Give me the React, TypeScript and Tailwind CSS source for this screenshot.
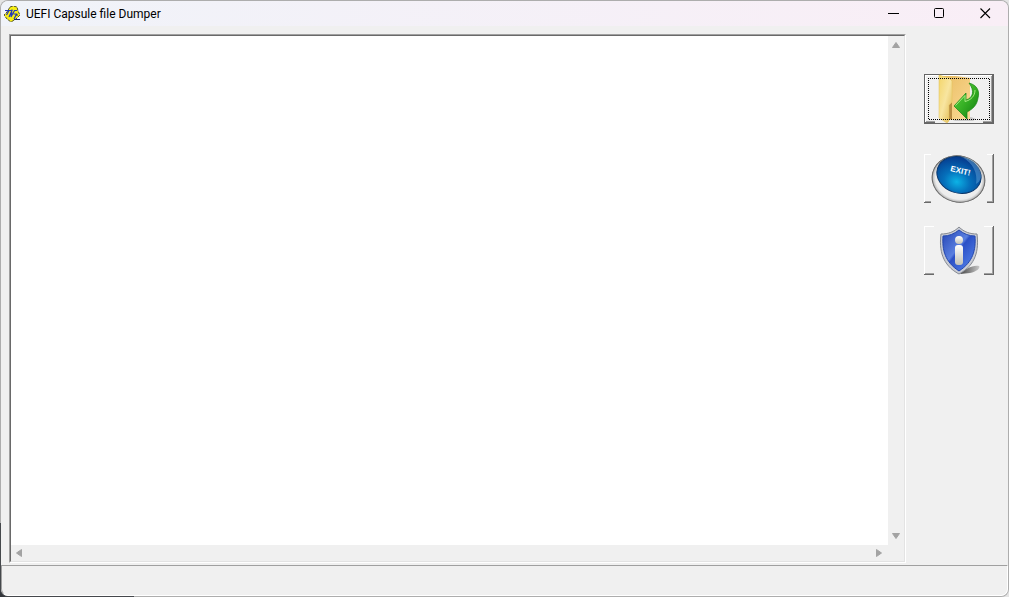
import type { ReactNode } from 'react';

function AppIcon() {
  return (
    <svg viewBox="0 0 16 16" className="w-4 h-4" aria-hidden="true">
      <path d="M6 1l3-1 4 1 1 4 2 4-4 4-5 3-4-3-3-4 3-3z" fill="#f6ee14" stroke="#2b2c1c" strokeWidth="0.8" strokeDasharray="3 1" />
      <path d="M1 4.500h4L2.500 9M5 4.500h3L5 11M8 3.500L7 11M7 11l3.500-6.500M10 4.500h3M9.500 8h3l-2.500 5" fill="none" stroke="#2339b8" strokeWidth="1.2" />
      <path d="M10 13.500h6M12 9h2" fill="none" stroke="#1a2474" strokeWidth="1.2" />
    </svg>
  );
}

function FolderArt() {
  return (
    <svg viewBox="0 0 70 50" className="block w-full h-full" aria-hidden="true">
      <defs>
        <linearGradient id="folderBack" x1="0" y1="0" x2="1" y2="1">
          <stop offset="0" stopColor="#e9bd62" />
          <stop offset="1" stopColor="#fbd995" />
        </linearGradient>
        <linearGradient id="folderFront" x1="0" y1="0" x2="1" y2="1">
          <stop offset="0" stopColor="#f3d569" />
          <stop offset="0.5" stopColor="#f8e5a0" />
          <stop offset="1" stopColor="#dfb64c" />
        </linearGradient>
        <linearGradient id="arrowGreen" x1="0" y1="0" x2="1" y2="1">
          <stop offset="0" stopColor="#62d648" />
          <stop offset="0.5" stopColor="#36b024" />
          <stop offset="1" stopColor="#0f7a10" />
        </linearGradient>
      </defs>
      <rect x="11" y="2" width="48" height="47" fill="#f0f0f0" />
      <path d="M29 46l18-3 5 2-3 2-18 0z" fill="#c9c9c9" />
      <path d="M16 2h16l14 2v41l-20 1z" fill="url(#folderBack)" />
      <path d="M25 31l3-3v17h-3z" fill="#b98d43" />
      <path d="M15 1l10 3 3 3v21l-3 3v16l-2 2-8-5z" fill="url(#folderFront)" stroke="#e3c25a" strokeWidth="0.5" />
      <path
        d="M45 9C53 11 56 17 54 24C53 31 49 35 43 38V45L30 32L42 19V26C49 24 51 17 45 9z"
        fill="url(#arrowGreen)"
        stroke="#168414"
        strokeWidth="0.7"
      />
      <path d="M31.500 31.500L41 21.500V27.500C47 26 51 22 51 16" fill="none" stroke="#a5ea82" strokeWidth="1" />
      <rect x="4.500" y="4.500" width="61" height="41" fill="none" stroke="#000" strokeDasharray="1 1" strokeDashoffset="0.5" shapeRendering="crispEdges" />
    </svg>
  );
}

function ExitArt() {
  return (
    <svg viewBox="0 0 70 49" className="block w-full h-full" aria-hidden="true">
      <defs>
        <radialGradient id="exitBlue" cx="0.5" cy="0.7" r="0.65">
          <stop offset="0" stopColor="#0cb3e6" />
          <stop offset="0.45" stopColor="#0570bb" />
          <stop offset="1" stopColor="#063f91" />
        </radialGradient>
        <radialGradient id="exitRim" cx="0.5" cy="0.5" r="0.5">
          <stop offset="0" stopColor="#fff" />
          <stop offset="0.86" stopColor="#ececec" />
          <stop offset="0.94" stopColor="#c4c4c4" />
          <stop offset="1" stopColor="#3a3a3a" />
        </radialGradient>
      </defs>
      <rect x="7" width="56" height="49" fill="#f0f0f0" />
      <ellipse cx="34.500" cy="25" rx="27" ry="23.500" transform="rotate(14 34.500 25)" fill="url(#exitRim)" />
      <ellipse cx="35" cy="21" rx="22.500" ry="18" transform="rotate(18 35 21)" fill="url(#exitBlue)" stroke="#0b376b" strokeWidth="1" />
      <path d="M38 3c11 1 19 9 19 20-1 4-3 6-5 7 2-11-3-21-14-27z" fill="#79b9e6" opacity="0.4" />
      <text x="26" y="17" transform="rotate(13 26 17)" fill="#fff" fontFamily="Liberation Sans, sans-serif" fontSize="8" fontWeight="700">
        EXIT!
      </text>
    </svg>
  );
}

function InfoArt() {
  return (
    <svg viewBox="0 0 70 49" className="block w-full h-full" aria-hidden="true">
      <defs>
        <linearGradient id="shieldBlue" x1="0" y1="0" x2="1" y2="1">
          <stop offset="0" stopColor="#2444b4" />
          <stop offset="0.45" stopColor="#5a80e0" />
          <stop offset="0.5" stopColor="#2b50c6" />
          <stop offset="1" stopColor="#5a8bf0" />
        </linearGradient>
        <linearGradient id="shieldInfo" x1="0" y1="0" x2="0" y2="1">
          <stop offset="0" stopColor="#fff" />
          <stop offset="1" stopColor="#c2c2b8" />
        </linearGradient>
        <linearGradient id="shieldShadow" x1="0" y1="0" x2="1" y2="0">
          <stop offset="0" stopColor="#444" />
          <stop offset="1" stopColor="#c8c8c8" />
        </linearGradient>
      </defs>
      <rect x="10" width="50" height="49" fill="#f0f0f0" />
      <path d="M36 48c5-5 12-9 19-8 2 2-3 6-9 7z" fill="url(#shieldShadow)" />
      <path
        d="M35 1c5 5 11 7 18 7 2 16-1 31-18 40C18 39 15 24 17 8c7 0 13-2 18-7z"
        fill="#c9ccd4"
        stroke="#858991"
        strokeWidth="1"
      />
      <path d="M35 4c5 4 10 6 16 6 1 14-2 26-16 35C21 36 18 24 19 10c6 0 11-2 16-6z" fill="url(#shieldBlue)" stroke="#2347ae" strokeWidth="1" />
      <circle cx="35" cy="14" r="4" fill="url(#shieldInfo)" />
      <rect x="31" y="19" width="8" height="20" rx="3" fill="url(#shieldInfo)" />
    </svg>
  );
}

function ToolButton({ label, focused, children }: { label: string; focused?: boolean; children: ReactNode }) {
  return (
    <button
      type="button"
      aria-label={label}
      className={
        focused
          ? 'w-[70px] h-[50px] shadow-[inset_0_0_0_1px_#646464,inset_-2px_-2px_#696969,inset_2px_2px_#fff,inset_-3px_-3px_#a0a0a0]'
          : 'w-[70px] h-[49px] shadow-[inset_-1px_-1px_#696969,inset_1px_1px_#fff,inset_-2px_-2px_#a0a0a0]'
      }
    >
      {children}
    </button>
  );
}

function ScrollArrow({ label, d }: { label: string; d: string }) {
  return (
    <button type="button" aria-label={label} className="w-4 h-4">
      <svg viewBox="0 0 16 16" className="block w-4 h-4" aria-hidden="true">
        <path d={d} fill="#a3a3a3" stroke="#a3a3a3" strokeLinejoin="round" />
      </svg>
    </button>
  );
}

function TitleBar() {
  return (
    <header className="flex items-center h-[25px] pl-[3px] bg-linear-to-r from-[#f0f3f9] to-[#f9eef6]">
      <AppIcon />
      <h1 className="flex-1 pl-1.5 text-[12px] leading-4 text-black">UEFI Capsule file Dumper</h1>
      <button type="button" aria-label="Minimize" className="flex items-center justify-center w-[45px] h-full">
        <svg viewBox="0 0 11 11" className="w-[11px] h-[11px]"><path d="M0 5.500h11" stroke="#000" /></svg>
      </button>
      <button type="button" aria-label="Maximize" className="flex items-center justify-center w-[46px] h-full">
        <svg viewBox="0 0 11 11" className="w-[11px] h-[11px]"><rect x="0.500" y="0.500" width="9" height="9" rx="1" fill="none" stroke="#000" /></svg>
      </button>
      <button type="button" aria-label="Close" className="flex items-center justify-center w-[46px] h-full">
        <svg viewBox="0 0 11 11" className="w-[11px] h-[11px]"><path d="M0.500 0.500l9.500 9.500M10 0.500l-9.500 9.500" stroke="#000" strokeWidth="1.1" /></svg>
      </button>
    </header>
  );
}

export default function App() {
  return (
    <div className="min-h-screen flex bg-[#e4e4e4] bg-[linear-gradient(#33363b,#33363b)] bg-size-[134px_74px] bg-bottom-left bg-no-repeat font-[Roboto,'Open_Sans',sans-serif]">
      <div className="flex-1 flex p-px rounded-lg bg-[#adadad] bg-[linear-gradient(#45484c,#45484c)] bg-size-[134px_74px] bg-bottom-left bg-no-repeat">
        <div className="flex-1 flex flex-col rounded-[7px] overflow-hidden bg-[#f0f0f0]">
          <TitleBar />
          <main className="flex-1 flex pt-2 pl-2 pb-[2px]">
            <div className="flex-1 flex border border-t-[#a0a0a0] border-l-[#a0a0a0] border-r-white border-b-white">
              <div className="flex-1 flex flex-col border border-t-[#696969] border-l-[#696969] border-r-[#e3e3e3] border-b-[#e3e3e3]">
                <div className="flex-1 flex">
                  <textarea
                    aria-label="Capsule output"
                    readOnly
                    className="flex-1 resize-none bg-white p-1 text-[12px] leading-4 outline-none"
                  />
                  <div className="flex flex-col justify-between w-4">
                    <ScrollArrow label="Scroll up" d="M8 6.500L11.500 11.500H4.500z" />
                    <ScrollArrow label="Scroll down" d="M8 9.500L4.500 4.500H11.500z" />
                  </div>
                </div>
                <div className="flex justify-between h-4 mr-4">
                  <ScrollArrow label="Scroll left" d="M5.500 8L10.500 4.500V11.500z" />
                  <ScrollArrow label="Scroll right" d="M9.500 8L4.500 4.500V11.500z" />
                </div>
              </div>
            </div>
            <aside className="flex flex-col pt-10 pl-[18px] pr-[14px]">
              <ToolButton label="Open capsule file" focused>
                <FolderArt />
              </ToolButton>
              <div className="flex flex-col gap-[23px] pt-[30px]">
                <ToolButton label="Exit">
                  <ExitArt />
                </ToolButton>
                <ToolButton label="About">
                  <InfoArt />
                </ToolButton>
              </div>
            </aside>
          </main>
          <footer className="h-[31px] rounded-b-[7px] border border-t-[#a0a0a0] border-l-[#a0a0a0] border-r-white border-b-white" />
        </div>
      </div>
    </div>
  );
}
